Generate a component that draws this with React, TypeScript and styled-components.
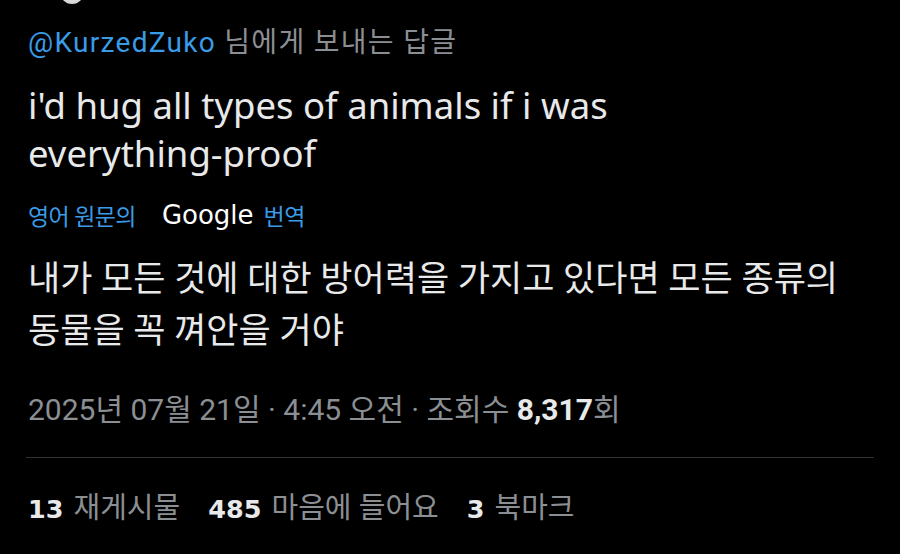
import styled, { createGlobalStyle } from 'styled-components';

const GlobalStyle = createGlobalStyle`
  html, body {
    margin: 0;
    padding: 0;
    background: #000;
  }
  body {
    font-family: Roboto, "Noto Sans CJK KR", sans-serif;
    color: #e7e9ea;
  }
`;

const Page = styled.div`
  width: 900px;
  height: 554px;
  overflow: hidden;
  background: #000;
  display: flex;
  flex-direction: column;
`;

// bottom edge of the previous tweet's avatar, cut off by the screenshot
const AvatarStub = styled.div`
  height: 4px;
  margin-left: 60px;
  width: 24px;
  overflow: hidden;
`;

const AvatarCircle = styled.div`
  width: 24px;
  height: 24px;
  border-radius: 50%;
  background: #d9d9d9;
  margin-top: -20px;
`;

const Body = styled.div`
  padding: 0 28px;
  display: flex;
  flex-direction: column;
`;

const ReplyLine = styled.div`
  margin-top: 21px;
  font-size: 28px;
  line-height: 36px;
  letter-spacing: 1.3px;
  color: #8b8f93;
  white-space: nowrap;
`;

const Handle = styled.span`
  color: #3a9be6;
`;

const TweetText = styled.div`
  margin-top: 20px;
  font-family: "Noto Sans", Roboto, sans-serif;
  font-size: 36.5px;
  line-height: 48px;
  color: #e7e9ea;
  white-space: nowrap;
`;

const TranslateRow = styled.div`
  margin-top: 21px;
  height: 34px;
  font-size: 23px;
  letter-spacing: -0.6px;
  color: #3a9be6;
  display: flex;
  align-items: center;
`;

const GoogleWord = styled.span`
  color: #fff;
  font-family: "DejaVu Sans", sans-serif;
  font-size: 26px;
  letter-spacing: 0;
  margin: 0 10px 0 26px;
`;

const Translated = styled.div`
  margin-top: 22px;
  font-size: 35px;
  line-height: 52px;
  color: #e7e9ea;
  white-space: nowrap;
`;

const Meta = styled.div`
  margin-top: 34px;
  font-size: 30px;
  line-height: 36px;
  color: #8b8f93;
  white-space: nowrap;
`;

const Strong = styled.span`
  color: #e7e9ea;
  font-weight: 700;
`;

const Divider = styled.div`
  margin: 29px 26px 0;
  height: 1px;
  background: #2f3336;
`;

const Stats = styled.div`
  margin-top: 33px;
  padding: 0 28px;
  display: flex;
  gap: 28px;
  font-size: 29px;
  line-height: 34px;
  color: #8b8f93;
`;

const Stat = styled.span`
  display: flex;
  align-items: baseline;
  gap: 10px;
`;

const Count = styled.span`
  color: #e7e9ea;
  font-family: "DejaVu Sans", sans-serif;
  font-weight: 700;
  font-size: 25.5px;
`;

const stats = [
  { count: '13', label: '재게시물' },
  { count: '485', label: '마음에 들어요' },
  { count: '3', label: '북마크' },
];

export default function App() {
  return (
    <>
      <GlobalStyle />
      <Page>
        <AvatarStub>
          <AvatarCircle />
        </AvatarStub>
        <Body>
          <ReplyLine>
            <Handle>@KurzedZuko</Handle> 님에게 보내는 답글
          </ReplyLine>
          <TweetText>
            i'd hug all types of animals if i was
            <br />
            everything-proof
          </TweetText>
          <TranslateRow>
            <span>영어 원문의</span>
            <GoogleWord>Google</GoogleWord>
            <span>번역</span>
          </TranslateRow>
          <Translated>
            내가 모든 것에 대한 방어력을 가지고 있다면 모든 종류의
            <br />
            동물을 꼭 껴안을 거야
          </Translated>
          <Meta>
            2025년 07월 21일 · 4:45 오전 · 조회수 <Strong>8,317</Strong>회
          </Meta>
        </Body>
        <Divider />
        <Stats>
          {stats.map((s) => (
            <Stat key={s.label}>
              <Count>{s.count}</Count>
              <span>{s.label}</span>
            </Stat>
          ))}
        </Stats>
      </Page>
    </>
  );
}
